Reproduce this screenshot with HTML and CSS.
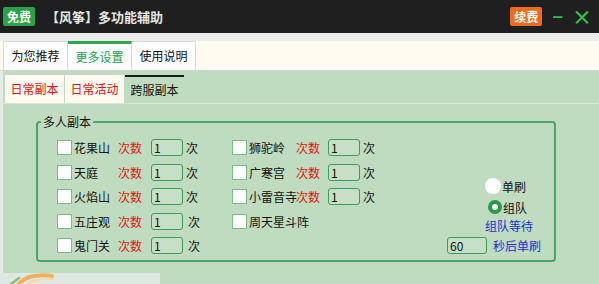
FILE: index.html
```html
<!DOCTYPE html>
<html lang="zh-CN">
<head>
<meta charset="UTF-8">
<title>【风筝】多功能辅助</title>
<link rel="stylesheet" href="styles.css">
</head>
<body>
<div class="titlebar">
  <span class="badge free">免费</span>
  <span class="title">【风筝】多功能辅助</span>
  <span class="spacer"></span>
  <span class="badge renew">续费</span>
  <span class="winbtn">−</span>
  <span class="winbtn close">×</span>
</div>

<div class="tabstrip">
  <div class="tab">为您推荐</div>
  <div class="tab active">更多设置</div>
  <div class="tab">使用说明</div>
</div>

<div class="page">
  <div class="subtabs">
    <div class="subtab">日常副本</div>
    <div class="subtab">日常活动</div>
    <div class="subtab active">跨服副本</div>
  </div>

  <div class="panel">
    <fieldset class="group">
      <legend>多人副本</legend>
      <div class="group-body">
        <div class="col col1">
          <div class="row"><span class="cb"></span><span class="name">花果山</span><span class="cnt">次数</span><span class="num">1</span><span>次</span></div>
          <div class="row"><span class="cb"></span><span class="name">天庭</span><span class="cnt">次数</span><span class="num">1</span><span>次</span></div>
          <div class="row"><span class="cb"></span><span class="name">火焰山</span><span class="cnt">次数</span><span class="num">1</span><span>次</span></div>
          <div class="row"><span class="cb"></span><span class="name">五庄观</span><span class="cnt">次数</span><span class="num">1</span><span class="unit-far">次</span></div>
          <div class="row"><span class="cb"></span><span class="name">鬼门关</span><span class="cnt">次数</span><span class="num">1</span><span class="unit-far">次</span></div>
        </div>
        <div class="col col2">
          <div class="row"><span class="cb"></span><span class="name">狮驼岭</span><span class="cnt">次数</span><span class="num">1</span><span>次</span></div>
          <div class="row"><span class="cb"></span><span class="name">广寒宫</span><span class="cnt">次数</span><span class="num">1</span><span>次</span></div>
          <div class="row"><span class="cb"></span><span class="name">小雷音寺</span><span class="cnt">次数</span><span class="num">1</span><span>次</span></div>
          <div class="row"><span class="cb"></span><span class="name">周天星斗阵</span></div>
        </div>
        <div class="col col3">
          <div class="radio-row"><span class="radio"></span><span>单刷</span></div>
          <div class="radio-row"><span class="radio on"></span><span>组队</span></div>
          <div class="wait">组队等待</div>
          <div class="wait-row"><span class="num wide">60</span><span class="blue">秒后单刷</span></div>
        </div>
      </div>
    </fieldset>
  </div>

  <div class="footer">
    <div class="logo">
      <svg width="160" height="11" viewBox="0 0 160 11">
        <path d="M18 12 C24 4 36 1 52 3" stroke="#f0b060" stroke-width="4" fill="none" stroke-linecap="round"/>
        <path d="M26 12 C32 7 42 5 54 6" stroke="#f7d9a8" stroke-width="2" fill="none"/>
        <path d="M11 11 L19 5" stroke="#8cc070" stroke-width="2.5" stroke-linecap="round"/>
      </svg>
    </div>
  </div>
</div>
</body>
</html>
```

FILE: styles.css
```css
body {
  margin: 0;
  width: 599px;
  height: 284px;
  overflow: hidden;
  font-family: "Noto Sans CJK SC", "Liberation Sans", sans-serif;
  font-size: 12px;
  color: #111;
  background: #c0dcc0;
}
.titlebar {
  height: 33px;
  background: #1f1f1f;
  display: flex;
  align-items: center;
  padding: 0 7px 0 3px;
}
.badge {
  width: 32px;
  height: 19px;
  line-height: 19px;
  text-align: center;
  color: #fff;
  font-weight: bold;
  font-size: 12px;
  border-radius: 2px;
}
.free {
  background: #2aa346;
}
.renew {
  background: #f26a1b;
}
.title {
  margin-left: 11px;
  color: #e6e6e6;
  font-weight: bold;
  font-size: 13px;
}
.spacer {
  flex: 1;
}
.winbtn {
  color: #2cc04a;
  font-weight: bold;
  font-size: 18px;
  line-height: 19px;
  margin-left: 10px;
}
.close {
  margin-left: 9px;
  font-size: 20px;
}
.tabstrip {
  display: flex;
  height: 29px;
  padding-left: 3px;
  background: #fffbf0;
  border-top: 8px solid #ececec;
  border-bottom: 1px solid #d4d4d4;
}
.tab {
  width: 63px;
  background: #fff;
  border-right: 1px solid #dcdcdc;
  border-top: 1px solid #dcdcdc;
  text-align: center;
  line-height: 28px;
  font-size: 12px;
}
.tab:first-child {
  border-left: 1px solid #dcdcdc;
}
.tab.active {
  color: #22a04a;
  border-top: 3px solid #2ba84d;
  line-height: 26px;
}
.page {
  border-left: 3px solid #e3ece3;
  height: 213px;
  position: relative;
}
.subtabs {
  display: flex;
  height: 28px;
  padding: 4px 0 0 2px;
  border-bottom: 1px solid #d6e8d6;
}
.subtab {
  width: 59px;
  margin-right: 1px;
  background: #fffbf0;
  color: #e01010;
  text-align: center;
  line-height: 28px;
}
.subtab.active {
  background: #c0dcc0;
  color: #111;
  border-top: 2px solid #1a1a1a;
  line-height: 26px;
}
.panel {
  padding: 10px 0 0 33px;
}
.group {
  width: 516px;
  height: 144px;
  margin: 0;
  padding: 0;
  border: 2px solid #4aa66a;
  border-radius: 4px;
}
.group legend {
  margin-left: 3px;
  padding: 0 2px;
  line-height: 16px;
  font-size: 12px;
}
.group-body {
  display: flex;
  padding: 9px 0 0 19px;
}
.col1 {
  width: 175px;
  flex: none;
}
.col2 {
  width: 215px;
  flex: none;
}
.row {
  display: flex;
  align-items: center;
  height: 17px;
  margin-bottom: 7.5px;
  white-space: nowrap;
}
.cb {
  width: 13px;
  height: 13px;
  background: #fff;
  border: 1px solid #7dbb8c;
  margin-right: 2px;
}
.col1 .name {
  width: 44px;
}
.col2 .name {
  width: 47px;
}
.cnt {
  color: #e01515;
  width: 33px;
}
.col2 .cnt {
  width: 32px;
}
.num {
  width: 28px;
  height: 15px;
  line-height: 15px;
  padding-left: 2px;
  border: 1px solid #3a9e5a;
  border-radius: 3px;
  background: #c6dfc6;
  margin-right: 3px;
}
.unit-far {
  margin-left: 2px;
}
.col3 {
  width: 100px;
  flex: none;
  display: flex;
  flex-direction: column;
  align-items: flex-start;
  align-self: flex-end;
  margin-bottom: 8px;
}
.radio-row {
  display: flex;
  align-items: center;
  height: 21px;
  padding-left: 38px;
}
.radio {
  flex: none;
  box-sizing: border-box;
  width: 16px;
  height: 16px;
  border-radius: 50%;
  background: #fff;
  margin-right: 1px;
}
.radio.on {
  width: 14px;
  height: 14px;
  margin: 0 1px 0 3px;
  border: 4px solid #2a9a4a;
}
.wait {
  color: #1a30d0;
  margin-left: 38px;
  line-height: 16px;
  margin-bottom: 3px;
}
.wait-row {
  display: flex;
  align-items: center;
}
.num.wide {
  width: 36px;
  margin-right: 6px;
}
.blue {
  color: #1a30d0;
}
.footer {
  position: absolute;
  left: -3px;
  bottom: 0;
}
.logo {
  width: 160px;
  height: 11px;
  background: #dde9e0;
}
.logo svg {
  display: block;
}
```
